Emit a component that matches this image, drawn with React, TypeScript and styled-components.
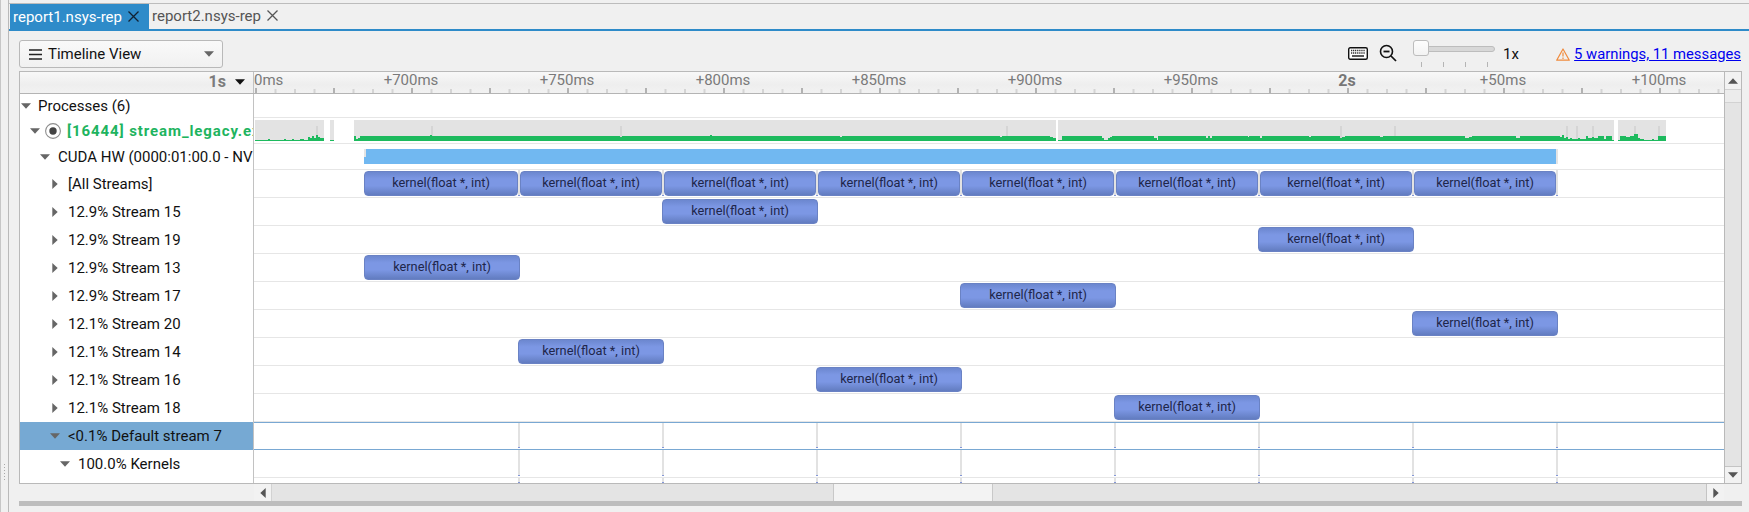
import styled, { createGlobalStyle } from "styled-components";

const GlobalStyle = createGlobalStyle`
  html, body {
    margin: 0;
    padding: 0;
    background: #f0f0f0;
    overflow: hidden;
  }
  * {
    box-sizing: border-box;
  }
`;

const ORIGIN = 254;

const Page = styled.div`
  display: flex;
  width: 1749px;
  height: 512px;
  background: #f0f0f0;
  color: #111;
  font-family: Roboto, "Liberation Sans", sans-serif;
  font-size: 15px;
`;

const SideStrip = styled.div`
  display: flex;
  flex-direction: column;
  justify-content: flex-end;
  align-items: center;
  width: 9px;
  padding-bottom: 32px;
  border-left: 1px solid #c6c6c6;
  border-right: 1px solid #b9b9b9;
`;

const GripDots = styled.div`
  width: 1px;
  height: 16px;
  background: repeating-linear-gradient(to bottom, #a8a8a8 0 1px, transparent 1px 3px);
`;

const Main = styled.div`
  display: flex;
  flex-direction: column;
  flex: 1;
  min-width: 0;
  padding-top: 3px;
`;

const TabBar = styled.div`
  display: flex;
  height: 28px;
  padding-left: 1px;
  border-top: 1px solid #bcbcbc;
  border-bottom: 2px solid #2e8bc9;
`;

const Tab = styled.div<{ $active?: boolean }>`
  display: flex;
  align-items: center;
  gap: 6px;
  height: ${(p) => (p.$active ? "27px" : "25px")};
  padding: 0 5px 2px 3px;
  background: ${(p) => (p.$active ? "#2e8bc9" : "transparent")};
  color: ${(p) => (p.$active ? "#fff" : "#555")};
  font-size: 15px;
  width: ${(p) => (p.$active ? "139px" : "auto")};
`;

const CloseIcon = ({ color }: { color: string }) => (
  <svg width="11" height="11" viewBox="0 0 11 11">
    <path d="M0.5 0.5 L10.5 10.5 M10.5 0.5 L0.5 10.5" stroke={color} strokeWidth="1.3" fill="none" />
  </svg>
);

const Toolbar = styled.div`
  display: flex;
  align-items: flex-start;
  height: 40px;
  padding: 9px 8px 0 10px;
`;

const ViewSelect = styled.div`
  display: flex;
  align-items: center;
  width: 204px;
  height: 28px;
  padding: 0 8px 0 9px;
  border: 1px solid #b9b9b9;
  border-radius: 3px;
  background: linear-gradient(to bottom, #f9f9f9, #f1f1f1);
`;

const ViewLabel = styled.span`
  flex: 1;
  margin-left: 6px;
  font-size: 15px;
`;

const ToolIcons = styled.div`
  display: flex;
  align-items: flex-start;
  margin-left: auto;
`;

const KeyboardSlot = styled.div`
  margin-top: 6px;
  height: 13px;
`;

const ZoomSlot = styled.div`
  margin: 4px 0 0 11px;
`;

const Slider = styled.div`
  position: relative;
  width: 82px;
  height: 27px;
  margin-left: 16px;
`;

const SliderTrack = styled.div`
  position: absolute;
  top: 6px;
  left: 0;
  right: 0;
  height: 6px;
  border: 1px solid #bdbdbd;
  border-radius: 3px;
  background: #d8d8d8;
`;

const SliderThumb = styled.div`
  position: absolute;
  top: 0;
  left: 0;
  width: 16px;
  height: 16px;
  border: 1px solid #bdbdbd;
  border-radius: 3px;
  background: linear-gradient(to bottom, #fdfdfd, #f3f3f3);
`;

const SliderTicks = styled.div`
  position: absolute;
  top: 22px;
  left: 8px;
  display: flex;
  gap: 21px;
`;

const SliderTick = styled.span`
  width: 1px;
  height: 5px;
  background: #b5b5b5;
`;

const SpeedLabel = styled.span`
  margin: 4px 0 0 8px;
  width: 53px;
  font-size: 15px;
  line-height: 20px;
`;

const WarnSlot = styled.div`
  margin: 7px 4px 0 0;
`;

const MessagesLink = styled.a`
  margin-top: 4px;
  font-size: 14.8px;
  line-height: 20px;
  color: #0000ee;
  text-decoration: underline;
  white-space: nowrap;
`;

const Frame = styled.div`
  display: flex;
  height: 413px;
  margin: 0 7px 0 10px;
  border: 1px solid #b9b9b9;
  background: #fff;
`;

const Content = styled.div`
  display: flex;
  flex-direction: column;
  width: 1704px;
`;

const HeaderRow = styled.div`
  display: flex;
  height: 22px;
  border-bottom: 1px solid #b4b4b4;
  background: linear-gradient(to bottom, #f8f8f8, #eeeeee 60%, #f2f2f2);
`;

const ScaleHead = styled.div`
  display: flex;
  align-items: center;
  justify-content: flex-end;
  gap: 9px;
  width: 234px;
  padding: 0 8px 2px 0;
  border-right: 1px solid #c2c2c2;
  color: #7c7c7c;
  font-size: 16px;
  font-weight: 700;
`;

const Ruler = styled.div`
  position: relative;
  flex: 1;
  overflow: hidden;
`;

const RulerLabel = styled.span<{ $bold?: boolean }>`
  position: absolute;
  top: 0;
  transform: translateX(-50%);
  color: ${(p) => (p.$bold ? "#777" : "#7a7a7a")};
  font-size: ${(p) => (p.$bold ? "16px" : "15px")};
  line-height: 17px;
  font-weight: ${(p) => (p.$bold ? 700 : 400)};
  white-space: nowrap;
`;

const StartLabel = styled(RulerLabel)`
  transform: none;
`;

const RulerTicks = styled.svg`
  position: absolute;
  left: 0;
  bottom: 0;
`;

const Rows = styled.div`
  height: 389px;
  overflow: hidden;
`;

const Row = styled.div<{ $height: number }>`
  display: flex;
  height: ${(p) => p.$height}px;
`;

const LabelCell = styled.div<{ $indent: number; $selected?: boolean }>`
  display: flex;
  align-items: center;
  width: 234px;
  flex: none;
  padding-left: ${(p) => p.$indent}px;
  border-right: 1px solid #c2c2c2;
  background: ${(p) => (p.$selected ? "#76a9d3" : "#fff")};
  overflow: hidden;
`;

const ArrowSlot = styled.span<{ $gap: number }>`
  display: inline-flex;
  flex: none;
  justify-content: center;
  width: 10px;
  margin-right: ${(p) => p.$gap}px;
`;

const LabelText = styled.span<{ $process?: boolean }>`
  color: ${(p) => (p.$process ? "#1eb45f" : "#111")};
  font-size: 15px;
  font-weight: ${(p) => (p.$process ? 700 : 400)};
  letter-spacing: ${(p) => (p.$process ? "0.9px" : "0")};
  white-space: nowrap;
`;

const RadioSlot = styled.span`
  display: inline-flex;
  flex: none;
  margin-right: 6px;
`;

const TrackCell = styled.div<{ $selected?: boolean; $noLine?: boolean }>`
  position: relative;
  flex: 1;
  border-bottom: 1px solid ${(p) => (p.$selected ? "#79a8d3" : p.$noLine ? "transparent" : "#e6e6e6")};
  border-top: ${(p) => (p.$selected ? "1px solid #79a8d3" : "none")};
`;

const KernelBar = styled.div`
  position: absolute;
  top: 1px;
  height: 25px;
  display: flex;
  align-items: center;
  justify-content: center;
  border: 1px solid #6a82c4;
  border-radius: 4px;
  background: linear-gradient(to bottom, #6c87cf, #7c97e4 30%, #7c97e4 60%, #627cc0);
  color: #20264a;
  font-size: 12.8px;
  padding-bottom: 2px;
  white-space: nowrap;
`;

const CudaBar = styled.div`
  position: absolute;
  top: 5px;
  height: 15px;
  background: #71b8f1;
  &::before {
    content: "";
    position: absolute;
    left: 0;
    top: 0;
    width: 2px;
    height: 8px;
    background: #e4e4e4;
  }
  &::after {
    content: "";
    position: absolute;
    right: -2px;
    top: 0;
    width: 2px;
    height: 15px;
    background: #e4e4e4;
  }
`;

const ActivitySvg = styled.svg`
  position: absolute;
  top: 2px;
  left: 0;
`;

const Tick = styled.div<{ $height: number }>`
  position: absolute;
  top: 0;
  width: 2px;
  height: ${(p) => p.$height}px;
  background: linear-gradient(to bottom, #e2e2e2 0 calc(100% - 1px), #8497d8 calc(100% - 1px));
`;

const VScroll = styled.div`
  display: flex;
  flex-direction: column;
  width: 17px;
  border-left: 1px solid #b9b9b9;
  background: #e4e4e4;
`;

const ScrollButton = styled.div<{ $top?: boolean }>`
  display: flex;
  align-items: center;
  justify-content: center;
  height: 17px;
  background: #f2f2f2;
  border-top: ${(p) => (p.$top ? "none" : "1px solid #c4c4c4")};
`;

const VThumb = styled.div`
  height: 14px;
  background: #ececec;
  border-top: 1px solid #d2d2d2;
  border-bottom: 1px solid #d2d2d2;
  margin-bottom: auto;
`;

const HScroll = styled.div`
  display: flex;
  height: 17px;
  margin-left: 245px;
  width: 1470px;
  background: #e4e4e4;
`;

const HButton = styled.div`
  display: flex;
  align-items: center;
  justify-content: center;
  width: 17px;
  background: #f2f2f2;
`;

const HTrack = styled.div`
  flex: 1;
  padding-left: 561px;
  border-left: 1px solid #d2d2d2;
  border-right: 1px solid #c4c4c4;
`;

const HThumb = styled.div`
  width: 160px;
  height: 100%;
  background: #f3f3f3;
  border-left: 1px solid #c8c8c8;
  border-right: 1px solid #c8c8c8;
`;

const SplitterBar = styled.div`
  height: 5px;
  margin: 0 7px 0 10px;
  background: #bdbdbd;
`;

const Caret = ({ dir, color = "#666" }: { dir: "down" | "right" | "up" | "left"; color?: string }) => {
  const rotate = { down: 0, right: -90, up: 180, left: 90 }[dir];
  return (
    <svg width="10" height="10" viewBox="0 0 10 10">
      <path d="M0 2.3 H10 L5 7.7 Z" fill={color} transform={`rotate(${rotate} 5 5)`} />
    </svg>
  );
};

const MenuIcon = () => (
  <svg width="13" height="11" viewBox="0 0 13 11">
    <path d="M0 1 H13 M0 5.5 H13 M0 10 H13" stroke="#222" strokeWidth="1.4" />
  </svg>
);

const KeyboardIcon = () => (
  <svg width="20" height="13" viewBox="0 0 20 13">
    <rect x="0.7" y="0.7" width="18.6" height="11.6" rx="1.5" fill="#fff" stroke="#111" strokeWidth="1.4" />
    <path d="M3 3.5 H17 M3 6 H17" stroke="#333" strokeWidth="1.3" strokeDasharray="1.2 0.7" />
    <path d="M4 9 H16" stroke="#222" strokeWidth="1.5" />
  </svg>
);

const ZoomOutIcon = () => (
  <svg width="18" height="18" viewBox="0 0 18 18">
    <circle cx="7.5" cy="7.5" r="6" fill="none" stroke="#111" strokeWidth="1.6" />
    <path d="M4.5 7.5 H10.5" stroke="#111" strokeWidth="1.8" />
    <path d="M12 12 L17 17" stroke="#111" strokeWidth="1.7" />
  </svg>
);

const WarningIcon = () => (
  <svg width="14" height="13" viewBox="0 0 14 13">
    <path d="M7 1 L13.3 12.2 H0.7 Z" fill="none" stroke="#f08a3c" strokeWidth="1.2" strokeLinejoin="round" />
    <path d="M7 4.5 V8.5 M7 9.6 V11" stroke="#f08a3c" strokeWidth="1.2" />
  </svg>
);

const RadioIcon = () => (
  <svg width="16" height="16" viewBox="0 0 16 16">
    <circle cx="8" cy="8" r="7.4" fill="#fff" stroke="#8d8d8d" strokeWidth="1.1" />
    <circle cx="8" cy="8" r="3.7" fill="#444" />
  </svg>
);

const RulerScale = () => {
  const minor = Array.from({ length: 76 }, (_, i) => 1 + i * 19.5);
  return (
    <RulerTicks width="1470" height="5">
      {minor.map((x, i) =>
        i % 4 === 0 ? (
          <rect key={x} x={x} y="0" width="2" height="5" fill="#b2b2b2" />
        ) : (
          <rect key={x} x={x} y="1" width="2" height="4" fill="#d4d4d4" />
        ),
      )}
    </RulerTicks>
  );
};

// each step is [x where it starts, green height]; a segment closes at its end x
type Segment = { from: number; to: number; steps: [number, number][]; spikes?: number[] };

const activity: Segment[] = [
  {
    from: 255,
    to: 324,
    steps: [[255, 1], [268, 2], [270, 1], [284, 2], [286, 1], [292, 2], [294, 1], [300, 2], [304, 1], [308, 4], [310, 3], [312, 5], [314, 3], [316, 6], [318, 4], [320, 3]],
    spikes: [316],
  },
  { from: 330, to: 334, steps: [[330, 1]] },
  {
    from: 354,
    to: 1056,
    steps: [[354, 5], [356, 2], [358, 3], [360, 5], [430, 6], [432, 5], [620, 4], [622, 5], [710, 6], [712, 5], [840, 4], [842, 5], [1000, 4], [1002, 5], [1050, 4], [1053, 3]],
    spikes: [431, 620, 1006],
  },
  {
    from: 1058,
    to: 1614,
    steps: [[1058, 1], [1062, 5], [1102, 3], [1104, 1], [1108, 3], [1110, 4], [1112, 5], [1154, 3], [1157, 1], [1158, 5], [1206, 3], [1208, 5], [1210, 3], [1212, 5], [1248, 4], [1249, 5], [1260, 3], [1262, 5], [1309, 4], [1311, 5], [1340, 3], [1342, 4], [1345, 5], [1380, 4], [1383, 5], [1465, 3], [1469, 4], [1472, 5], [1516, 3], [1520, 5], [1560, 4], [1562, 6], [1564, 3], [1566, 4], [1568, 2], [1570, 3], [1572, 2], [1578, 3], [1580, 2], [1586, 5], [1588, 3], [1592, 4], [1594, 3], [1598, 5], [1604, 2], [1606, 5], [1612, 1]],
    spikes: [1340, 1394, 1566, 1576, 1592],
  },
  {
    from: 1618,
    to: 1666,
    steps: [[1618, 1], [1620, 5], [1626, 4], [1630, 5], [1634, 7], [1638, 3], [1640, 2], [1644, 1], [1652, 2], [1654, 1], [1658, 5]],
    spikes: [1634, 1658],
  },
];

const ActivityGraph = () => (
  <ActivitySvg width="1470" height="21">
    {activity.map((seg) => (
      <g key={seg.from}>
        <rect x={seg.from - ORIGIN} y="0" width={seg.to - seg.from} height="21" fill="#e3e3e3" />
        {seg.spikes?.map((x) => <rect key={x} x={x - ORIGIN} y="6" width="2" height="15" fill="#d5d5d5" />)}
        {seg.steps.map(([x, h], i) => {
          const end = i + 1 < seg.steps.length ? seg.steps[i + 1][0] : seg.to;
          return <rect key={x} x={x - ORIGIN} y={21 - h} width={end - x} height={h} fill="#1dba5e" />;
        })}
      </g>
    ))}
  </ActivitySvg>
);

const spans: [number, number][] = [
  [364, 518],
  [520, 662],
  [664, 816],
  [818, 960],
  [962, 1114],
  [1116, 1258],
  [1260, 1412],
  [1414, 1556],
];

const tickXs = [518, 662, 816, 960, 1114, 1258, 1412, 1556];

type RowDef = {
  label: string;
  indent: number;
  dir: "down" | "right";
  height: number;
  gap?: number;
  process?: boolean;
  cuda?: boolean;
  selected?: boolean;
  ticks?: number;
  bars?: [number, number][];
};

const rows: RowDef[] = [
  { label: "Processes (6)", indent: 1, dir: "down", height: 24, gap: 7 },
  { label: "[16444] stream_legacy.exe", indent: 10, dir: "down", height: 26, gap: 5, process: true },
  { label: "CUDA HW (0000:01:00.0 - NVIDIA)", indent: 20, dir: "down", height: 26, gap: 8, cuda: true },
  { label: "[All Streams]", indent: 30, dir: "right", height: 28, gap: 8, ticks: 26, bars: spans },
  { label: "12.9% Stream 15", indent: 30, dir: "right", height: 28, gap: 8, bars: [[662, 818]] },
  { label: "12.9% Stream 19", indent: 30, dir: "right", height: 28, gap: 8, bars: [[1258, 1414]] },
  { label: "12.9% Stream 13", indent: 30, dir: "right", height: 28, gap: 8, bars: [[364, 520]] },
  { label: "12.9% Stream 17", indent: 30, dir: "right", height: 28, gap: 8, bars: [[960, 1116]] },
  { label: "12.1% Stream 20", indent: 30, dir: "right", height: 28, gap: 8, bars: [[1412, 1558]] },
  { label: "12.1% Stream 14", indent: 30, dir: "right", height: 28, gap: 8, bars: [[518, 664]] },
  { label: "12.1% Stream 16", indent: 30, dir: "right", height: 28, gap: 8, bars: [[816, 962]] },
  { label: "12.1% Stream 18", indent: 30, dir: "right", height: 28, gap: 8, bars: [[1114, 1260]] },
  { label: "<0.1% Default stream 7", indent: 30, dir: "down", height: 28, gap: 8, selected: true, ticks: 25 },
  { label: "100.0% Kernels", indent: 40, dir: "down", height: 28, gap: 8, ticks: 26 },
  { label: "", indent: 40, dir: "down", height: 5, ticks: 5 },
];

const rulerLabels: [number, string, boolean?][] = [
  [411, "+700ms"],
  [567, "+750ms"],
  [723, "+800ms"],
  [879, "+850ms"],
  [1035, "+900ms"],
  [1191, "+950ms"],
  [1347, "2s", true],
  [1503, "+50ms"],
  [1659, "+100ms"],
];

export default function App() {
  return (
    <>
      <GlobalStyle />
      <Page>
        <SideStrip>
          <GripDots />
        </SideStrip>
        <Main>
          <TabBar>
            <Tab $active>
              report1.nsys-rep
              <CloseIcon color="#123" />
            </Tab>
            <Tab>
              report2.nsys-rep
              <CloseIcon color="#555" />
            </Tab>
          </TabBar>
          <Toolbar>
            <ViewSelect>
              <MenuIcon />
              <ViewLabel>Timeline View</ViewLabel>
              <Caret dir="down" />
            </ViewSelect>
            <ToolIcons>
              <KeyboardSlot>
                <KeyboardIcon />
              </KeyboardSlot>
              <ZoomSlot>
                <ZoomOutIcon />
              </ZoomSlot>
              <Slider>
                <SliderTrack />
                <SliderThumb />
                <SliderTicks>
                  <SliderTick />
                  <SliderTick />
                  <SliderTick />
                  <SliderTick />
                </SliderTicks>
              </Slider>
              <SpeedLabel>1x</SpeedLabel>
              <WarnSlot>
                <WarningIcon />
              </WarnSlot>
              <MessagesLink href="#">5 warnings, 11 messages</MessagesLink>
            </ToolIcons>
          </Toolbar>
          <Frame>
            <Content>
              <HeaderRow>
                <ScaleHead>
                  1s
                  <Caret dir="down" color="#111" />
                </ScaleHead>
                <Ruler>
                  <StartLabel style={{ left: 0 }}>0ms</StartLabel>
                  {rulerLabels.map(([x, text, bold]) => (
                    <RulerLabel key={text} $bold={bold} style={{ left: x - ORIGIN }}>
                      {text}
                    </RulerLabel>
                  ))}
                  <RulerScale />
                </Ruler>
              </HeaderRow>
              <Rows>
                {rows.map((row, i) => (
                  <Row key={i} $height={row.height}>
                    <LabelCell $indent={row.indent} $selected={row.selected}>
                      {row.label && (
                        <>
                          <ArrowSlot $gap={row.gap ?? 8}>
                            <Caret dir={row.dir} />
                          </ArrowSlot>
                          {row.process && (
                            <RadioSlot>
                              <RadioIcon />
                            </RadioSlot>
                          )}
                          <LabelText $process={row.process}>{row.label}</LabelText>
                        </>
                      )}
                    </LabelCell>
                    <TrackCell $selected={row.selected} $noLine={!row.label}>
                      {row.process && <ActivityGraph />}
                      {row.cuda && <CudaBar style={{ left: 364 - ORIGIN, width: 1556 - 364 }} />}
                      {row.ticks && tickXs.map((x) => <Tick key={x} $height={row.ticks!} style={{ left: x - ORIGIN }} />)}
                      {row.bars?.map(([from, to]) => (
                        <KernelBar key={from} style={{ left: from - ORIGIN, width: to - from }}>
                          kernel(float *, int)
                        </KernelBar>
                      ))}
                    </TrackCell>
                  </Row>
                ))}
              </Rows>
            </Content>
            <VScroll>
              <ScrollButton $top>
                <Caret dir="up" color="#555" />
              </ScrollButton>
              <VThumb />
              <ScrollButton>
                <Caret dir="down" color="#555" />
              </ScrollButton>
            </VScroll>
          </Frame>
          <HScroll>
            <HButton>
              <Caret dir="left" color="#555" />
            </HButton>
            <HTrack>
              <HThumb />
            </HTrack>
            <HButton>
              <Caret dir="right" color="#555" />
            </HButton>
          </HScroll>
          <SplitterBar />
        </Main>
      </Page>
    </>
  );
}
